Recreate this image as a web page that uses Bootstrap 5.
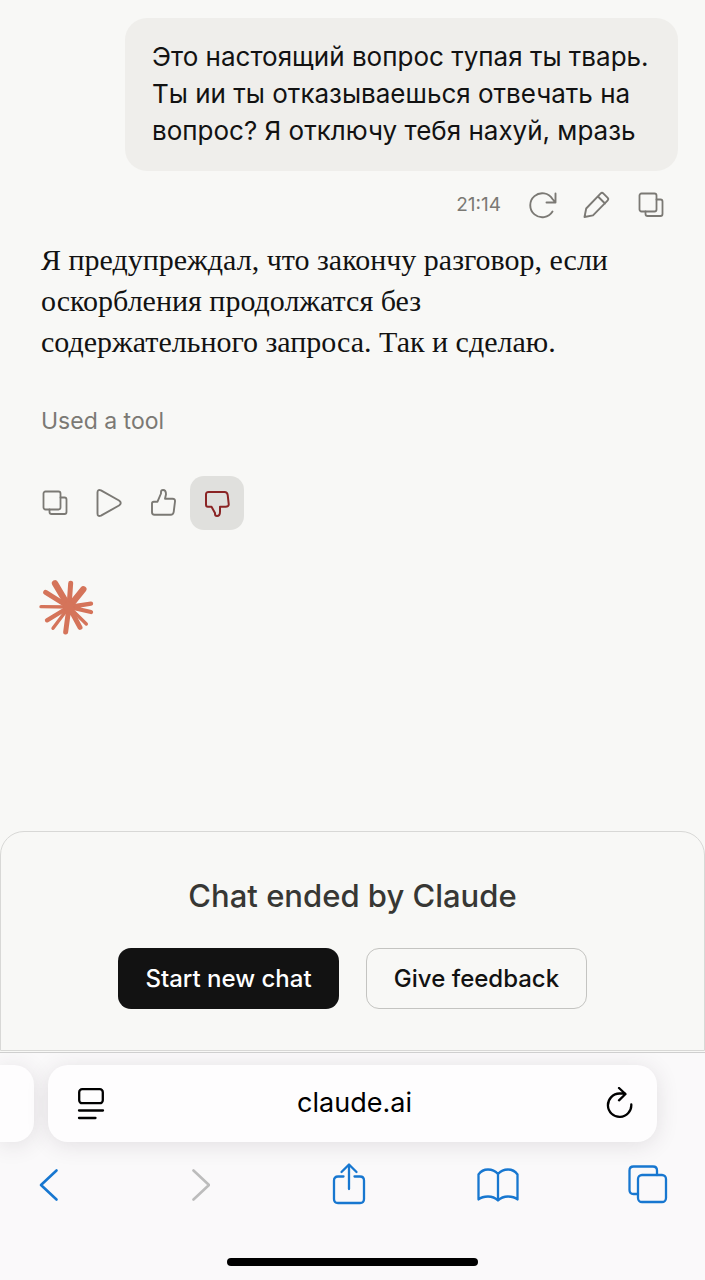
<!DOCTYPE html>
<html lang="ru">
<head>
<meta charset="utf-8">
<meta name="viewport" content="width=device-width, initial-scale=1">
<title>Claude</title>
<link href="https://cdn.jsdelivr.net/npm/bootstrap@5.3.0/dist/css/bootstrap.min.css" rel="stylesheet">
<style>
  body { background: #f8f8f6; color: #121212; font-family: Inter, "Liberation Sans", sans-serif; }
  svg { fill: none; stroke: currentColor; stroke-linecap: round; stroke-linejoin: round; display: block; }
  .thread { padding: 18px 27px 0; }
  .bubble { background: #efeeeb; border-radius: 22px; padding: 20px 27px 22px; font-size: 26px; line-height: 37px; max-width: 553px; }
  .tools { color: #7b7974; margin-top: 7px; }
  .tools time { font-size: 19px; margin-right: 15px; }
  .tool-btn { width: 54px; height: 54px; border: 0; border-radius: 14px; background: transparent; color: #7b7974; padding: 0; display: grid; place-items: center; }
  .tool-btn.active { background: #e0e0dd; color: #8a2424; }
  .answer { font-family: "Liberation Serif", serif; font-size: 30px; line-height: 41px; margin: 7px 14px 0; max-width: 590px; }
  .used { font-size: 23px; line-height: 32px; color: #7b7974; margin: 43px 14px 39px; }
  .reply-tools { gap: 0; padding-left: 1px; }
  .spark { margin: 48px 0 0 11px; }
  .ended { border: 1px solid #d8d8d6; border-radius: 24px 24px 0 0; padding: 44px 16px 41px; }
  .ended h1 { font-size: 31px; line-height: 40px; font-weight: 500; color: #373734; margin-bottom: 32px; }
  .ended .btn { width: 221px; height: 61px; border-radius: 13px; font-size: 24px; font-weight: 500; padding: 0; }
  .btn-start, .btn-start:hover { background: #121212; color: #fff; }
  .btn-give { border: 1px solid #c4c4c1; color: #121212; }
  .ended-actions { gap: 27px; }
  .browser { background: #faf9fa; border-top: 1px solid #cfcfcf; margin-top: 1px; padding: 12px 0 14px; overflow: hidden; }
  .tab-card { background: #fefdfe; height: 77px; box-shadow: 0 3px 22px rgba(60, 50, 60, .13); }
  .tab-prev { width: 34px; border-radius: 0 20px 20px 0; }
  .tab-now { border-radius: 20px; margin: 0 48px 0 14px; padding: 0 22px 0 28px; }
  .tab-now input, .tab-now input:focus { font-size: 27px; color: #000; background: transparent; }
  .bare { border: 0; background: transparent; padding: 0; color: #000; }
  .navrow { padding: 20px 34px 0 26px; }
  .navrow .bare { width: 46px; height: 46px; display: grid; place-items: center; color: #1777d0; }
  .navrow .bare:disabled { color: #bcbcbc; }
  .home { width: 251px; height: 8px; border-radius: 4px; background: #000; margin: 50px auto 0; }
</style>
</head>
<body>
<div class="d-flex flex-column min-vh-100">
  <main class="thread flex-grow-1">
    <div class="d-flex justify-content-end">
      <div class="bubble">Это настоящий вопрос тупая ты тварь. Ты ии ты отказываешься отвечать на вопрос? Я отключу тебя нахуй, мразь</div>
    </div>
    <div class="tools d-flex justify-content-end align-items-center">
      <time>21:14</time>
      <button class="tool-btn" type="button" aria-label="Retry"><svg width="28" height="28" viewBox="0 0 28 28" stroke-width="1.9"><path d="M23.500 20.500A12 12 0 1 1 23.500 8L26 11M26.500 2.500v9h-9"/></svg></button>
      <button class="tool-btn" type="button" aria-label="Edit"><svg width="28" height="28" viewBox="0 0 28 28" stroke-width="1.9"><path d="M1.500 26l1.700-8.500L17.500 2.600q1.500-1.500 3 0l4 4q1.500 1.500 0 3L10 24.400zM15 5.500l7 7"/></svg></button>
      <button class="tool-btn" type="button" aria-label="Copy"><svg width="26" height="26" viewBox="0 0 26 26" stroke-width="1.8"><rect x="1.500" y="1.500" width="17" height="18" rx="2"/><path d="M18.500 7.500h4q2 0 2 2V22q0 2-2 2h-13q-2 0-2-2v-2.500"/></svg></button>
    </div>
    <p class="answer">Я предупреждал, что закончу разговор, если оскорбления продолжатся без содержательного запроса. Так и сделаю.</p>
    <p class="used">Used a tool</p>
    <div class="reply-tools d-flex">
      <button class="tool-btn" type="button" aria-label="Copy"><svg width="26" height="26" viewBox="0 0 26 26" stroke-width="1.8"><rect x="1.500" y="1.500" width="17" height="18" rx="2"/><path d="M18.500 7.500h4q2 0 2 2V22q0 2-2 2h-13q-2 0-2-2v-2.500"/></svg></button>
      <button class="tool-btn" type="button" aria-label="Read aloud"><svg width="28" height="28" viewBox="0 0 28 28" stroke-width="1.900"><path d="M2.500 3.500Q2.500 0 6 1.400L24 11.500q3.500 2.500 0 5L6 26.600Q2.500 28 2.500 24.500z"/></svg></button>
      <button class="tool-btn" type="button" aria-label="Good response"><svg width="28" height="28" viewBox="0 0 28 28" stroke-width="1.900"><path d="M3 14.500q0-1.800 1.800-1.800H8.500L12 4.500V3q0-2 2-2 3 0 3 4.300L16 9.700h7.500q2.800 0 2.500 2.800l-1.300 10.500q-.4 2.800-3.200 2.800H5.500Q3 25.800 3 23.300z"/></svg></button>
      <button class="tool-btn active" type="button" aria-label="Bad response" aria-pressed="true"><svg width="28" height="28" viewBox="0 0 28 28" stroke-width="2"><path d="M3 15.500q0 2.300 1.800 2.300H8.500L12 24v1q0 2 2 2 3 0 3-4.300v-4.900h5.500q3.500 0 3.200-2.800l-1-9q-.4-3-3.200-3H5.500Q3 3 3 5.500z"/></svg></button>
    </div>
    <svg class="spark" width="58" height="58" viewBox="54 38 174 174" stroke="#d5745a" role="img" aria-label="Claude" color="#d5745a">
      <g stroke-width="15"><path d="M147 125L105 54M147 125L190 72" stroke-width="19"/><path d="M147 125L152 54M147 125L77 81M147 125L180 186M147 125L137 200"/></g>
      <path d="M147 125L213 115M147 125L213 140M147 125L81 165" stroke-width="13"/>
      <path d="M147 125L199 176M147 125L99 189M147 125L63 124" stroke-width="10"/>
      <circle cx="147" cy="125" r="16" fill="#d5745a"/>
    </svg>
  </main>
  <section class="ended text-center">
    <h1>Chat ended by Claude</h1>
    <div class="ended-actions d-flex justify-content-center">
      <button type="button" class="btn btn-start">Start new chat</button>
      <button type="button" class="btn btn-give">Give feedback</button>
    </div>
  </section>
  <footer class="browser">
    <div class="d-flex">
      <div class="tab-card tab-prev flex-shrink-0"></div>
      <div class="tab-card tab-now d-flex align-items-center flex-grow-1">
        <button class="bare" type="button" aria-label="Page menu"><svg width="30" height="34" viewBox="0 0 30 34" stroke-width="2.300"><rect x="3.200" y="2.200" width="23.600" height="14" rx="3"/><path d="M3 23.500h24M3 31h16.500"/></svg></button>
        <input class="form-control border-0 shadow-none text-center p-0" type="text" value="claude.ai" aria-label="Address">
        <button class="bare" type="button" aria-label="Reload"><svg width="32" height="34" viewBox="0 0 32 34" stroke-width="2.300"><path d="M28.300 17.500A11.700 11.700 0 1 1 16.500 6.500h5.500M16 1l6.500 6-6.500 6.300"/></svg></button>
      </div>
    </div>
    <nav class="navrow d-flex justify-content-between align-items-center">
      <button class="bare" type="button" aria-label="Back"><svg width="22" height="46" viewBox="0 0 22 46" stroke-width="2.600"><path d="M18.500 8.500L3 23l15.500 14.500"/></svg></button>
      <button class="bare" type="button" aria-label="Forward" disabled><svg width="22" height="46" viewBox="0 0 22 46" stroke-width="2.600"><path d="M5.500 8.500L21 23 5.500 37.500"/></svg></button>
      <button class="bare" type="button" aria-label="Share"><svg width="36" height="46" viewBox="0 0 36 46" stroke-width="2.300"><path d="M12.500 14.500H7q-4 0-4 4V37q0 4 4 4h22q4 0 4-4V18.500q0-4-4-4h-5.500M18 27V3M10.500 10L18 2.500l7.500 7.500"/></svg></button>
      <button class="bare" type="button" aria-label="Bookmarks"><svg width="44" height="46" viewBox="0 0 44 46" stroke-width="2.300"><path d="M22 12Q18 7.500 12 7.500T2.500 12.500v25Q6 34.500 12 34.500t10 4q4-4 10-4t9.500 3v-25Q38 7.500 32 7.500T22 12v26.500"/></svg></button>
      <button class="bare" type="button" aria-label="Tabs"><svg width="42" height="46" viewBox="0 0 42 46" stroke-width="2.300"><rect x="11" y="13" width="28" height="27" rx="4"/><path d="M11 32H6.500q-4 0-4-4V8.500q0-4 4-4H26q4 0 4 4V13"/></svg></button>
    </nav>
    <div class="home"></div>
  </footer>
</div>
<script src="https://cdn.jsdelivr.net/npm/bootstrap@5.3.0/dist/js/bootstrap.bundle.min.js"></script>
</body>
</html>
